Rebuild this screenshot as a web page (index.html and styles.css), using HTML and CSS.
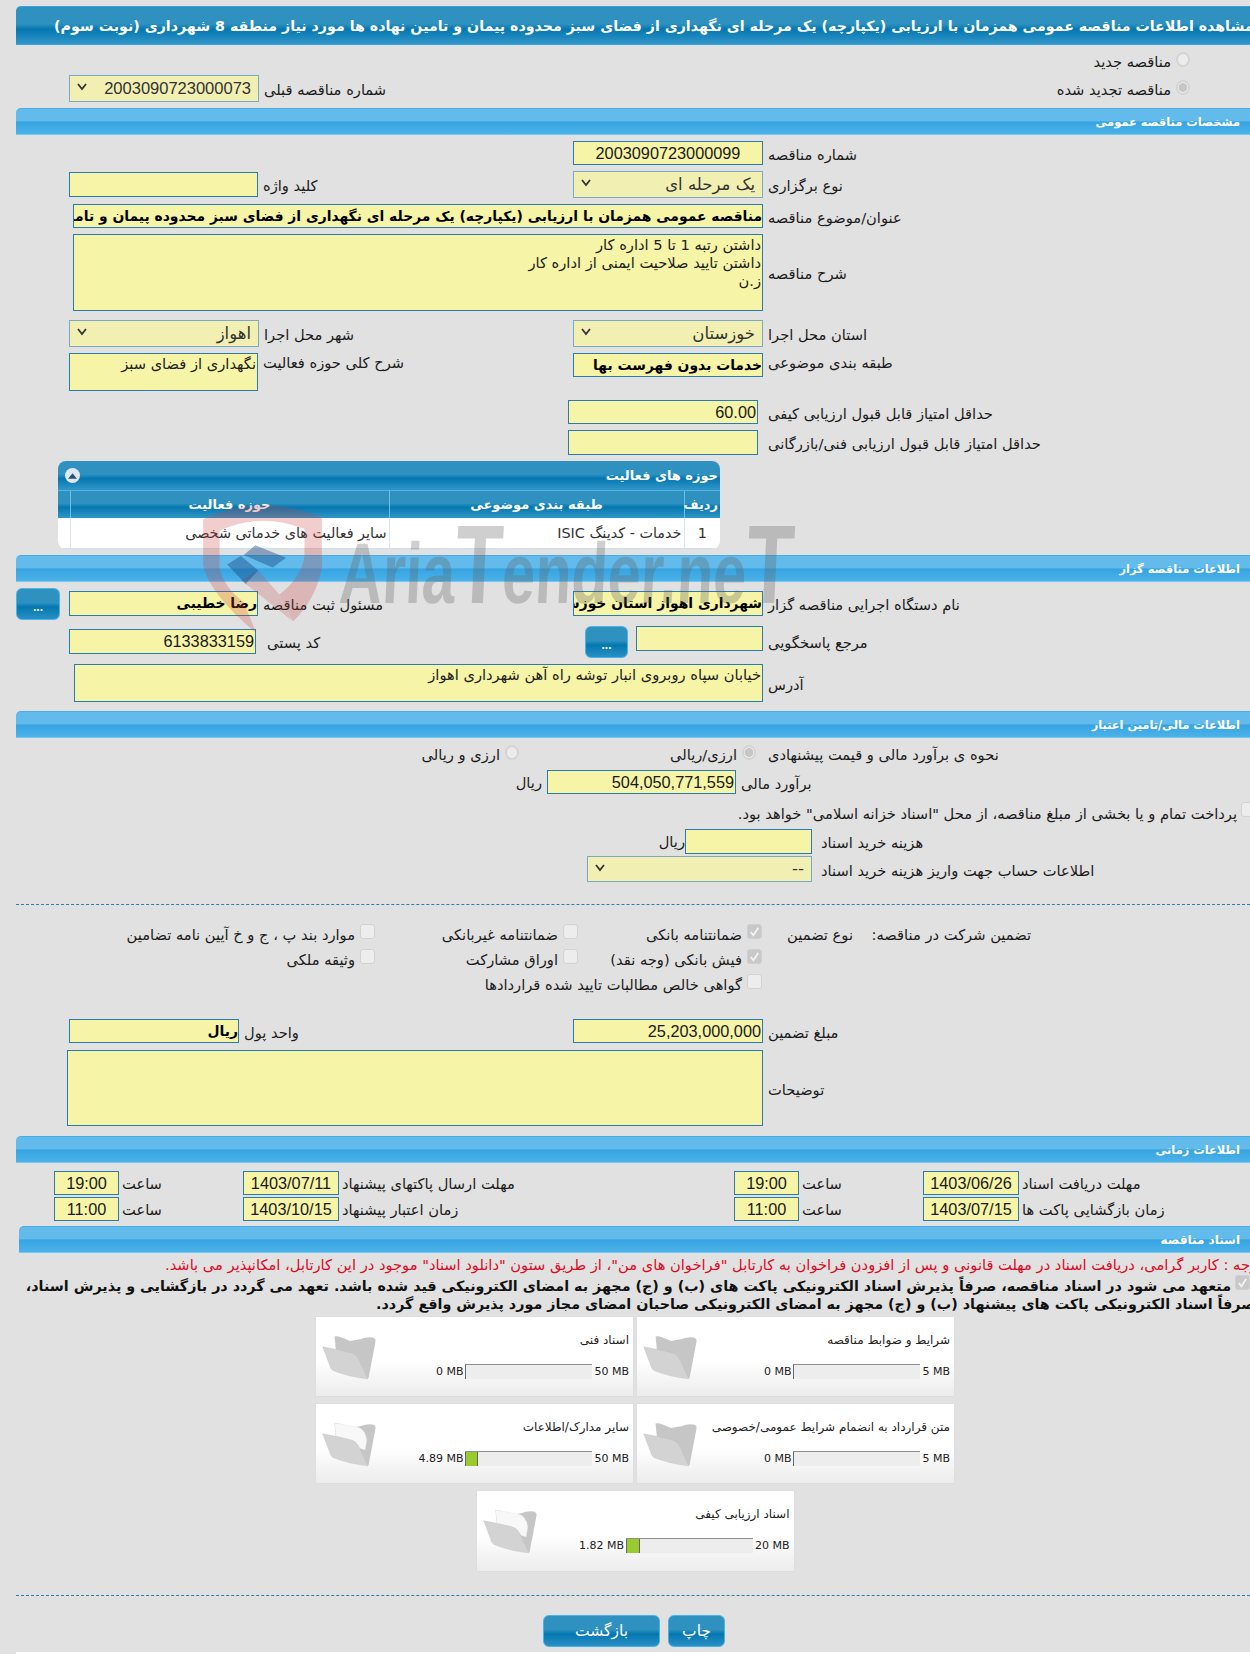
FILE: index.html
```html
<!DOCTYPE html>
<html lang="fa" dir="rtl">
<head>
<meta charset="utf-8">
<title>مشاهده اطلاعات مناقصه</title>
<link rel="stylesheet" href="styles.css">
</head>
<body>
<div class="page">
  <h1 class="title"><span>مشاهده اطلاعات مناقصه عمومی همزمان با ارزیابی (یکپارچه) یک مرحله ای نگهداری از فضای سبز محدوده پیمان و تامین نهاده ها مورد نیاز منطقه 8 شهرداری (نوبت سوم)</span></h1>

  <div class="form">
    <div class="row h27 mt3">
      <div class="cell"></div>
      <div class="cell end pr-radio pt5"><label class="opt"><span class="radio"></span><span>مناقصه جدید</span></label></div>
    </div>
    <div class="row h27">
      <div class="cell field"><div class="box sel w190 h27 numsel"><svg class="arrow" viewBox="0 0 10 8"><path d="M1 1l4 5 4-5" /></svg><span>2003090723000073</span></div><span class="lbl">شماره مناقصه قبلی</span></div>
      <div class="cell end pr-radio pt6"><label class="opt"><span class="radio on"></span><span>مناقصه تجدید شده</span></label></div>
    </div>
  </div>

  <h2 class="bar mt6">مشخصات مناقصه عمومی</h2>
  <div class="form">
    <div class="row h30 mt6">
      <div class="cell"></div>
      <div class="cell field"><div class="box w190 h24 num center">2003090723000099</div><span class="lbl">شماره مناقصه</span></div>
    </div>
    <div class="row h33">
      <div class="cell field top-1"><div class="box w189 h25"></div><span class="lbl">کلید واژه</span></div>
      <div class="cell field"><div class="box sel w190 h27"><svg class="arrow" viewBox="0 0 10 8"><path d="M1 1l4 5 4-5" /></svg><span>یک مرحله ای</span></div><span class="lbl">نوع برگزاری</span></div>
    </div>
    <div class="row h30">
      <div class="cell span field ml4"><div class="box w690 h24 strong">مناقصه عمومی همزمان با ارزیابی (یکپارچه) یک مرحله ای نگهداری از فضای سبز محدوده پیمان و تامین نهاده ها مورد نیاز منطقه 8 شهرداری (نوبت سوم)</div><span class="lbl">عنوان/موضوع مناقصه</span></div>
    </div>
    <div class="row h86">
      <div class="cell span field ml4"><div class="box area w690 h77">داشتن رتبه 1 تا 5 اداره کار<br>داشتن تایید صلاحیت ایمنی از اداره کار<br>ز.ن</div><span class="lbl">شرح مناقصه</span></div>
    </div>
    <div class="row h33">
      <div class="cell field"><div class="box sel w190 h27"><svg class="arrow" viewBox="0 0 10 8"><path d="M1 1l4 5 4-5" /></svg><span>اهواز</span></div><span class="lbl">شهر محل اجرا</span></div>
      <div class="cell field"><div class="box sel w190 h27"><svg class="arrow" viewBox="0 0 10 8"><path d="M1 1l4 5 4-5" /></svg><span>خوزستان</span></div><span class="lbl">استان محل اجرا</span></div>
    </div>
    <div class="row h47">
      <div class="cell field atop"><div class="box area w189 h38">نگهداری از فضای سبز</div><span class="lbl lbl-top">شرح کلی حوزه فعالیت</span></div>
      <div class="cell field atop"><div class="box w190 h24 strong">خدمات بدون فهرست بها</div><span class="lbl lbl-top">طبقه بندی موضوعی</span></div>
    </div>
    <div class="row h30">
      <div class="cell"></div>
      <div class="cell field shift-5"><div class="box w190 h24 num">60.00</div><span class="lbl gap10">حداقل امتیاز قابل قبول ارزیابی کیفی</span></div>
    </div>
    <div class="row h31">
      <div class="cell"></div>
      <div class="cell field shift-5"><div class="box w190 h25"></div><span class="lbl gap10">حداقل امتیاز قابل قبول ارزیابی فنی/بازرگانی</span></div>
    </div>
  </div>

  <div class="grid-panel">
    <div class="grid-cap"><span>حوزه های فعالیت</span><span class="collapse"><svg viewBox="0 0 10 6"><path d="M5 0l5 6H0z"/></svg></span></div>
    <table class="grid">
      <thead><tr><th class="c-num">ردیف</th><th class="c-cat">طبقه بندی موضوعی</th><th class="c-act">حوزه فعالیت</th><th class="c-end"></th></tr></thead>
      <tbody><tr><td class="c-num">1</td><td class="c-cat">خدمات - کدینگ ISIC</td><td class="c-act">سایر فعالیت های خدماتی شخصی</td><td class="c-end"></td></tr></tbody>
    </table>
  </div>

  <h2 class="bar mt6">اطلاعات مناقصه گزار</h2>
  <div class="form">
    <div class="row h38 mt6">
      <div class="cell field atop"><button class="dots out" type="button">...</button><div class="box w189 h25 strong top3">رضا خطیبی</div><span class="lbl lbl-top3">مسئول ثبت مناقصه</span></div>
      <div class="cell field atop"><div class="box w190 h25 strong top3">شهرداری اهواز استان خوزستان</div><span class="lbl lbl-top3">نام دستگاه اجرایی مناقصه گزار</span></div>
    </div>
    <div class="row h38">
      <div class="cell field atop"><div class="box w187 h25 num top3">6133833159</div><span class="lbl gap6 lbl-top3">کد پستی</span></div>
      <div class="cell field atop ml12"><button class="dots" type="button">...</button><div class="box w127 h25"></div><span class="lbl lbl-top3">مرجع پاسخگویی</span></div>
    </div>
    <div class="row h47">
      <div class="cell span field atop ml5"><div class="box area w689 h38">خیابان سپاه روبروی انبار توشه راه آهن شهرداری اهواز</div><span class="lbl lbl-addr">آدرس</span></div>
    </div>
  </div>

  <h2 class="bar">اطلاعات مالی/تامین اعتبار</h2>
  <div class="form">
    <div class="row h26 mt6">
      <div class="cell end pr54 pt2"><label class="opt"><span class="radio"></span><span>ارزی و ریالی</span></label></div>
      <div class="cell field atop"><div class="w190 optcell pt2"><label class="opt"><span class="radio on"></span><span>ارزی/ریالی</span></label></div><span class="lbl lbl-opt">نحوه ی برآورد مالی و قیمت پیشنهادی</span></div>
    </div>
    <div class="row h30">
      <div class="cell span field ml449"><span class="unit">ریال</span><div class="box w189 h24 num">504,050,771,559</div><span class="lbl">برآورد مالی</span></div>
    </div>
    <div class="line h29">
      <span class="txt">پرداخت تمام و یا بخشی از مبلغ مناقصه، از محل "اسناد خزانه اسلامی" خواهد بود.</span><span class="check clip"></span>
    </div>
    <div class="row h27">
      <div class="cell span field ml592"><span class="unit unit-tight">ریال</span><div class="box w127 h25"></div><span class="lbl gap9">هزینه خرید اسناد</span></div>
    </div>
    <div class="row h26">
      <div class="cell span field ml518"><div class="box sel w225 h26"><svg class="arrow" viewBox="0 0 10 8"><path d="M1 1l4 5 4-5" /></svg><span>--</span></div><span class="lbl gap9">اطلاعات حساب جهت واریز هزینه خرید اسناد</span></div>
    </div>
  </div>

  <hr class="dash mt22">

  <div class="guarantee">
    <span class="g-a txt">تضمین شرکت در مناقصه:</span>
    <span class="g-b txt">نوع تضمین</span>
    <label class="g-c chk"><span class="check on"><svg viewBox="0 0 12 12"><path d="M2.5 6.5l2.5 3 4.5-7"/></svg></span><span>ضمانتنامه بانکی</span></label>
    <label class="g-d chk"><span class="check"></span><span>ضمانتنامه غیربانکی</span></label>
    <label class="g-e chk"><span class="check"></span><span>موارد بند پ ، ج و خ آیین نامه تضامین</span></label>
    <label class="g-c chk"><span class="check on"><svg viewBox="0 0 12 12"><path d="M2.5 6.5l2.5 3 4.5-7"/></svg></span><span>فیش بانکی (وجه نقد)</span></label>
    <label class="g-d chk"><span class="check"></span><span>اوراق مشارکت</span></label>
    <label class="g-e chk"><span class="check"></span><span>وثیقه ملکی</span></label>
    <label class="g-c g-wide chk"><span class="check"></span><span>گواهی خالص مطالبات تایید شده قراردادها</span></label>
  </div>

  <div class="form">
    <div class="row h31 mt20">
      <div class="cell field"><div class="box w170 h24 strong">ریال</div><span class="lbl">واحد پول</span></div>
      <div class="cell field"><div class="box w190 h24 num">25,203,000,000</div><span class="lbl">مبلغ تضمین</span></div>
    </div>
    <div class="row h86">
      <div class="cell span field shift-2"><div class="box area w696 h76"></div><span class="lbl">توضیحات</span></div>
    </div>
  </div>

  <h2 class="bar">اطلاعات زمانی</h2>
  <div class="times">
    <div class="field"><div class="box w65 h24 num center">19:00</div><span class="lbl">ساعت</span></div>
    <div class="field"><div class="box w96 h24 num center">1403/07/11</div><span class="lbl">مهلت ارسال پاکتهای پیشنهاد</span></div>
    <div class="field"><div class="box w65 h24 num center">19:00</div><span class="lbl">ساعت</span></div>
    <div class="field"><div class="box w96 h24 num center">1403/06/26</div><span class="lbl">مهلت دریافت اسناد</span></div>
    <div class="field"><div class="box w65 h24 num center">11:00</div><span class="lbl">ساعت</span></div>
    <div class="field"><div class="box w96 h24 num center">1403/10/15</div><span class="lbl">زمان اعتبار پیشنهاد</span></div>
    <div class="field"><div class="box w65 h24 num center">11:00</div><span class="lbl">ساعت</span></div>
    <div class="field"><div class="box w96 h24 num center">1403/07/15</div><span class="lbl">زمان بازگشایی پاکت ها</span></div>
  </div>

  <h2 class="bar bar-inset">اسناد مناقصه</h2>
  <div class="notice"><span>توجه : کاربر گرامی، دریافت اسناد در مهلت قانونی و پس از افزودن فراخوان به کارتابل "فراخوان های من"، از طریق ستون "دانلود اسناد" موجود در این کارتابل، امکانپذیر می باشد.</span></div>
  <p class="pledge"><span class="check on inline"><svg viewBox="0 0 12 12"><path d="M2.5 6.5l2.5 3 4.5-7"/></svg></span>متعهد می شود در اسناد مناقصه، صرفاً پذیرش اسناد الکترونیکی پاکت های (ب) و (ج) مجهز به امضای الکترونیکی قید شده باشد. تعهد می گردد در بازگشایی و پذیرش اسناد،<br>صرفاً اسناد الکترونیکی پاکت های پیشنهاد (ب) و (ج) مجهز به امضای الکترونیکی صاحبان امضای مجاز مورد پذیرش واقع گردد.</p>

  <div class="files">
    <div class="card">
      <svg class="folder" viewBox="60 75 165 140"><path class="f-back" d="M100 82Q110 78 145 95L175 90Q195 82 215 85Q223 88 220 100L200 205Q150 195 110 185Z"/><path class="f-front" d="M65 112Q100 118 150 130Q165 135 172 150L198 207Q140 200 95 182Q88 178 85 165Z"/></svg>
      <div class="card-body"><div class="card-title">اسناد فنی</div><div class="meter"><span class="mb">0 MB</span><div class="track"><div class="used u0"></div></div><span class="mb">50 MB</span></div></div>
    </div>
    <div class="card">
      <svg class="folder" viewBox="60 75 165 140"><path class="f-back" d="M100 82Q110 78 145 95L175 90Q195 82 215 85Q223 88 220 100L200 205Q150 195 110 185Z"/><path class="f-front" d="M65 112Q100 118 150 130Q165 135 172 150L198 207Q140 200 95 182Q88 178 85 165Z"/></svg>
      <div class="card-body"><div class="card-title">شرایط و ضوابط مناقصه</div><div class="meter"><span class="mb">0 MB</span><div class="track"><div class="used u0"></div></div><span class="mb">5 MB</span></div></div>
    </div>
    <div class="card">
      <svg class="folder" viewBox="60 75 165 140"><path class="f-back" d="M100 82Q110 78 145 95L175 90Q195 82 215 85Q223 88 220 100L200 205Q150 195 110 185Z"/><path class="f-paper" d="M100 80L170 93Q190 100 195 130L190 160L105 130Z"/><path class="f-front" d="M65 112Q100 118 150 130Q165 135 172 150L198 207Q140 200 95 182Q88 178 85 165Z"/></svg>
      <div class="card-body"><div class="card-title">سایر مدارک/اطلاعات</div><div class="meter"><span class="mb">4.89 MB</span><div class="track"><div class="used u13"></div></div><span class="mb">50 MB</span></div></div>
    </div>
    <div class="card">
      <svg class="folder" viewBox="60 75 165 140"><path class="f-back" d="M100 82Q110 78 145 95L175 90Q195 82 215 85Q223 88 220 100L200 205Q150 195 110 185Z"/><path class="f-front" d="M65 112Q100 118 150 130Q165 135 172 150L198 207Q140 200 95 182Q88 178 85 165Z"/></svg>
      <div class="card-body"><div class="card-title">متن قرارداد به انضمام شرایط عمومی/خصوصی</div><div class="meter"><span class="mb">0 MB</span><div class="track"><div class="used u0"></div></div><span class="mb">5 MB</span></div></div>
    </div>
    <div class="card card-mid">
      <svg class="folder" viewBox="60 75 165 140"><path class="f-back" d="M100 82Q110 78 145 95L175 90Q195 82 215 85Q223 88 220 100L200 205Q150 195 110 185Z"/><path class="f-paper" d="M100 80L170 93Q190 100 195 130L190 160L105 130Z"/><path class="f-front" d="M65 112Q100 118 150 130Q165 135 172 150L198 207Q140 200 95 182Q88 178 85 165Z"/></svg>
      <div class="card-body"><div class="card-title">اسناد ارزیابی کیفی</div><div class="meter"><span class="mb">1.82 MB</span><div class="track"><div class="used u14"></div></div><span class="mb">20 MB</span></div></div>
    </div>
  </div>

  <hr class="dash mt24">

  <div class="actions">
    <button class="btn btn-back" type="button">بازگشت</button>
    <button class="btn btn-print" type="button">چاپ</button>
  </div>
  <div class="tail"></div>

  <div class="watermark">
    <svg class="wm-shield" viewBox="0 0 130 145">
      <path class="wm-red" d="M3 22Q60 -6 126 20L126 72Q120 105 96 128L82 100Q105 82 108 60L108 32Q62 14 20 34L20 72Q24 92 45 108L58 140Q10 100 3 70Z"/>
      <path class="wm-red2" d="M42 85L60 75L82 100L95 127Z"/>
      <path class="wm-blue" d="M28 69L42 60L60 75L47 89Z"/>
      <path class="wm-blue" d="M45 59L57 49L89 62L75 72Z"/>
    </svg>
    <div class="wm-text">Aria<span class="wm-cap">T</span>ender.ne<span class="wm-cap">T</span></div>
  </div>
</div>
</body>
</html>
```

FILE: styles.css
```css
* { box-sizing: border-box; }
html, body { margin: 0; padding: 0; height: 1654px; overflow: hidden; background: #e1e1e1; }
body { font-family: "DejaVu Sans", sans-serif; font-size: 14.67px; color: #1c1c1c; }
.page { position: relative; padding: 6px 0 0 16px; width: 1250px; height: 1654px; overflow: hidden; }

.title {
  display: flex; direction: ltr; margin: 0; height: 39px; padding: 0 0 0 38px; align-items: center;
  color: #fff; font-size: 14.2px; font-weight: bold; white-space: nowrap; border-radius: 5px 0 0 0;
  background: linear-gradient(#2e91bf 0, #2e91bf 46%, #0477b0 60%, #3196c8 100%);
  border-bottom: 1px solid #35a5ea; border-top: 1px solid #3aa2dc;
}
.title span { direction: rtl; flex: none; }

.bar {
  margin: 0; height: 27px; padding: 0 10px; color: #fff; font-size: 11.4px; font-weight: bold; line-height: 26px;
  border-radius: 5px 0 0 0; border-top: 1px solid #45aee6; border-bottom: 1px solid #74c9f2;
  background: linear-gradient(#62bbea 0, #62bbea 47%, #36a4e1 52%, #4cb2e8 100%);
}
.bar-inset { margin: 3px 0 0 3px; font-size: 12px; }

.form { direction: ltr; padding-left: 53px; }
.row { display: grid; grid-template-columns: 504px 1fr; align-items: start; }
.h26 { height: 26px; } .h27 { height: 27px; } .h29 { height: 29px; } .h30 { height: 30px; } .h31 { height: 31px; }
.h33 { height: 33px; } .h38 { height: 38px; } .h47 { height: 47px; } .h86 { height: 86px; }
.box.h24 { height: 24px; line-height: 22px; } .box.h25 { height: 25px; line-height: 23px; } .box.h26 { height: 26px; line-height: 24px; }
.box.h27 { height: 27px; line-height: 25px; } .box.h38 { height: 38px; } .box.h76 { height: 76px; } .box.h77 { height: 77px; }
.mt3 { margin-top: 3px; } .mt6 { margin-top: 6px; } .mt20 { margin-top: 20px; } .mt22 { margin-top: 22px; } .mt24 { margin-top: 24px; }
.pt2 { padding-top: 2px; } .pt5 { padding-top: 5px; } .pt6 { padding-top: 6px; }

.cell { min-width: 0; }
.span { grid-column: 1 / -1; }
.end { display: flex; justify-content: flex-end; }
.field { display: flex; align-items: center; gap: 5px; }
.atop { align-items: flex-start; }
.top-1 { margin-top: 1px; }
.top3 { margin-top: 3px; }
.ml4 { margin-left: 4px; } .ml5 { margin-left: 5px; } .ml12 { margin-left: 12px; } .ml449 { margin-left: 449px; } .ml592 { margin-left: 592px; } .ml518 { margin-left: 518px; }
.shift-5 { margin-left: -5px; } .shift-2 { margin-left: -2px; }
.pr-radio { padding-right: 60px; }
.pr54 { padding-right: 54px; }

.box {
  flex: none; direction: rtl; overflow: hidden; white-space: nowrap; padding: 0 1px;
  background: #f6f4a6; border: 1px solid #2a7bb0; font-size: 14.67px; color: #222;
}
.w65 { width: 65px; } .w96 { width: 96px; } .w127 { width: 127px; } .w170 { width: 170px; } .w187 { width: 187px; } .w189 { width: 189px; }
.w190 { width: 190px; } .w225 { width: 225px; } .w689 { width: 689px; } .w690 { width: 690px; } .w696 { width: 696px; }
.num { font-family: "Liberation Sans", sans-serif; font-size: 16.3px; direction: ltr; text-align: right; padding: 0 1px; color: #1a1a1a; }
.center { text-align: center; }
.strong { font-size: 13.9px; font-weight: bold; color: #000; padding: 0; }
.area { white-space: normal; line-height: 18px; padding: 1px 1px; }
.sel { display: flex; align-items: center; justify-content: space-between; direction: ltr; padding: 0 7px 0 7px; background: #f2efb2; border-color: #7aa9c6; font-size: 16.5px; color: #333; }
.numsel { font-family: "Liberation Sans", sans-serif; font-size: 16.5px; }
.sel span { direction: rtl; }
.arrow { width: 10px; height: 8px; margin-top: -3px; flex: none; }
.arrow path { fill: none; stroke: #333; stroke-width: 1.8; }

.lbl, .txt, .opt, .chk, .unit { direction: rtl; white-space: nowrap; font-size: 14.67px; color: #1c1c1c; }
.lbl { line-height: 18px; padding-top: 3px; }
.lbl-top { margin-top: -2px; }
.lbl-top3 { margin-top: 5px; }
.lbl-addr { margin-top: 9px; }
.lbl-opt { margin-top: -1px; }
.gap6 { margin-left: 6px; } .gap9 { margin-left: 4px; } .gap10 { margin-left: 5px; }
.unit { flex: none; width: 24px; }
.unit-tight { margin-right: -5px; }
.opt { display: flex; direction: rtl; align-items: flex-start; gap: 5px; line-height: 18px; }
.optcell { display: flex; justify-content: flex-end; padding-right: 7px; flex: none; }

.radio { flex: none; width: 14px; height: 15px; margin-top: -1px; border-radius: 50%; border: 2px solid #d4d4d4; background: #ececec; }
.radio.on { background: radial-gradient(circle, #c6c6c6 0, #c6c6c6 55%, #ececec 62%); }
.check { display: inline-block; flex: none; width: 15px; height: 15px; border-radius: 3px; border: 1px solid #d2d2d2; background: #ededed; }
.check.on { background: #c8c8c8; border-color: #cfcfcf; }
.check svg { display: block; width: 13px; height: 13px; }
.check path { fill: none; stroke: #f4f4f4; stroke-width: 1.6; }
.clip { margin: -3px -6px 0 4px; }
.line { display: flex; direction: ltr; justify-content: flex-end; align-items: flex-start; padding-top: 5px; }
.inline { vertical-align: top; margin: -2px 5px 0 4px; }

.dash { height: 0; margin-bottom: 0; margin-right: 0; margin-left: 0; border: 0; border-top: 1px dashed #2a7fb2; }

.grid-panel { margin: 0 auto 0 42px; width: 662px; height: 88px; direction: rtl; background: #fff; border-radius: 8px; overflow: hidden; box-shadow: inset 0 -2px 0 #cfe0ea, inset 2px 0 0 #cfe0ea; }
.grid-cap {
  display: flex; justify-content: space-between; align-items: center; height: 30px; padding: 0 2px 0 7px;
  background: linear-gradient(#2e91bf 0, #2e91bf 46%, #0477b0 60%, #3196c8 100%);
  border-bottom: 1px solid #55b2e4; color: #fff; font-size: 13px; font-weight: bold;
}
.collapse { display: flex; align-items: center; justify-content: center; width: 15px; height: 15px; border-radius: 50%; background: #dfe7f3; }
.collapse svg { width: 9px; height: 6px; fill: #24566f; }
.grid { width: 662px; table-layout: fixed; border-collapse: collapse; font-size: 14.4px; }
.grid th { height: 27px; padding: 0 2px; color: #fff; font-size: 13px; font-weight: bold; background: linear-gradient(#2e91bf 0, #2e91bf 46%, #0477b0 60%, #3196c8 100%); border-left: 1px solid #68bfe8; }
.grid td { height: 30px; padding: 0 2px; border-left: 1px solid #dfe4e8; color: #333; background: #fff; }
.c-num { width: 36px; text-align: center; }
.grid th.c-num { text-align: left; padding-left: 1px; }
.c-cat { width: 295px; }
.c-act { width: 319px; }
.c-end { width: 12px; border-left: 0 !important; }
.grid td.c-cat, .grid td.c-act { text-align: right; }

.dots {
  display: block; flex: none; width: 43px; height: 32px; margin-right: 3px; padding: 6px 0 0; color: #fff; font: bold 12px "Liberation Sans", sans-serif; border: 1px solid #4cb4e8; border-radius: 6px;
  background: linear-gradient(#2e91bf 0, #2e91bf 46%, #0477b0 60%, #2990c4 100%);
}
.out { width: 44px; margin: 0 4px 0 -53px; }

.guarantee {
  display: grid; direction: rtl; grid-template-columns: 178px 91px 184px 203px 1fr; grid-auto-rows: 25px;
  margin-top: 19px; padding-right: 219px; align-items: start;
}
.chk { display: flex; gap: 5px; align-items: flex-start; }
.chk .check { margin-top: 0; }
.guarantee .txt { line-height: 18px; margin-top: 2px; }
.chk span:last-child { line-height: 18px; margin-top: 2px; }
.g-a { grid-column: 1; }
.g-b { grid-column: 2; }
.g-c { grid-column: 3; }
.g-d { grid-column: 4; }
.g-e { grid-column: 5; }
.g-wide { grid-column: 3 / 6; }

.times { display: grid; direction: ltr; grid-template-columns: 189px 491px 189px 1fr; grid-auto-rows: 26px; margin-top: 8px; padding-left: 38px; }
.times .field { gap: 3px; align-items: flex-start; }
.times .lbl { margin-top: 1px; }
.times .num { padding: 0; }

.notice { display: flex; direction: ltr; height: 24px; margin: 0 0 0 149px; padding-top: 3px; }
.notice span { flex: none; direction: rtl; white-space: nowrap; color: #dd0a24; font-size: 14.67px; line-height: 18px; }
.pledge { margin: 0 -5px 0 0; height: 36px; font-size: 14.3px; font-weight: bold; line-height: 18px; white-space: nowrap; color: #111; text-align: right; }

.files { display: grid; direction: ltr; grid-template-columns: 317px 317px; gap: 8px 4px; margin: 4px auto 0 300px; width: 638px; }
.card {
  display: flex; height: 79px; padding: 0 4px 0 5px; direction: ltr;
  background: linear-gradient(#fff 0, #fff 55%, #ececec 100%); box-shadow: 0 0 1px #d0d0d0;
}
.card-mid { grid-column: 1 / -1; justify-self: center; width: 317px; height: 80px; }
.folder { flex: none; width: 56px; height: 48px; margin-top: 17px; }
.f-back { fill: #c6c6c6; }
.f-front { fill: #d3d3d3; stroke: #bdbdbd; stroke-width: 1; }
.f-paper { fill: #f8f8f8; stroke: #e0e0e0; }
.card-body { flex: 1; min-width: 0; direction: rtl; }
.card-title { height: 47px; padding-top: 14px; font-size: 12px; line-height: 18px; color: #222; white-space: nowrap; }
.meter { display: flex; direction: ltr; justify-content: flex-end; align-items: center; gap: 2px; }
.mb { font-size: 11px; color: #222; white-space: nowrap; }
.track { width: 127px; height: 15px; background: #ededed; border-top: 1px solid #8f8f8f; }
.used { height: 14px; background: #9acb2e; border-left: 1px solid #666; border-right: 1px solid #666; }
.u0 { width: 2px; background: none; border-right: 0; }
.u13 { width: 13px; }
.u14 { width: 14px; }

.actions { display: flex; direction: ltr; gap: 8px; margin: 19px 0 0 527px; }
.btn {
  height: 32px; padding: 0; color: #fff; font: 15.5px "DejaVu Sans", sans-serif; border: 1px solid #45b3e8; border-radius: 6px;
  background: linear-gradient(#2e91bf 0, #2e91bf 46%, #0477b0 60%, #2990c4 100%);
}
.btn-back { width: 117px; }
.btn-print { width: 57px; }
.tail { height: 2px; margin-top: 5px; background: #fff; }

.watermark { position: absolute; left: 198px; top: 498px; width: 620px; height: 145px; pointer-events: none; direction: ltr; }
.wm-shield { position: absolute; left: 0; top: 0; width: 130px; height: 140px; }
.wm-red { fill: rgba(200, 60, 60, .26); }
.wm-red2 { fill: rgba(200, 60, 60, .22); }
.wm-blue { fill: rgba(20, 70, 130, .42); }
.wm-text {
  position: absolute; left: 142px; top: 17px; font: bold 86px/100px "Liberation Sans", sans-serif; white-space: nowrap; color: rgba(95, 95, 95, .3);
  transform: scaleX(.69) skewX(-4deg); transform-origin: 0 50%;
}
.wm-cap { font-size: 112px; }
```
